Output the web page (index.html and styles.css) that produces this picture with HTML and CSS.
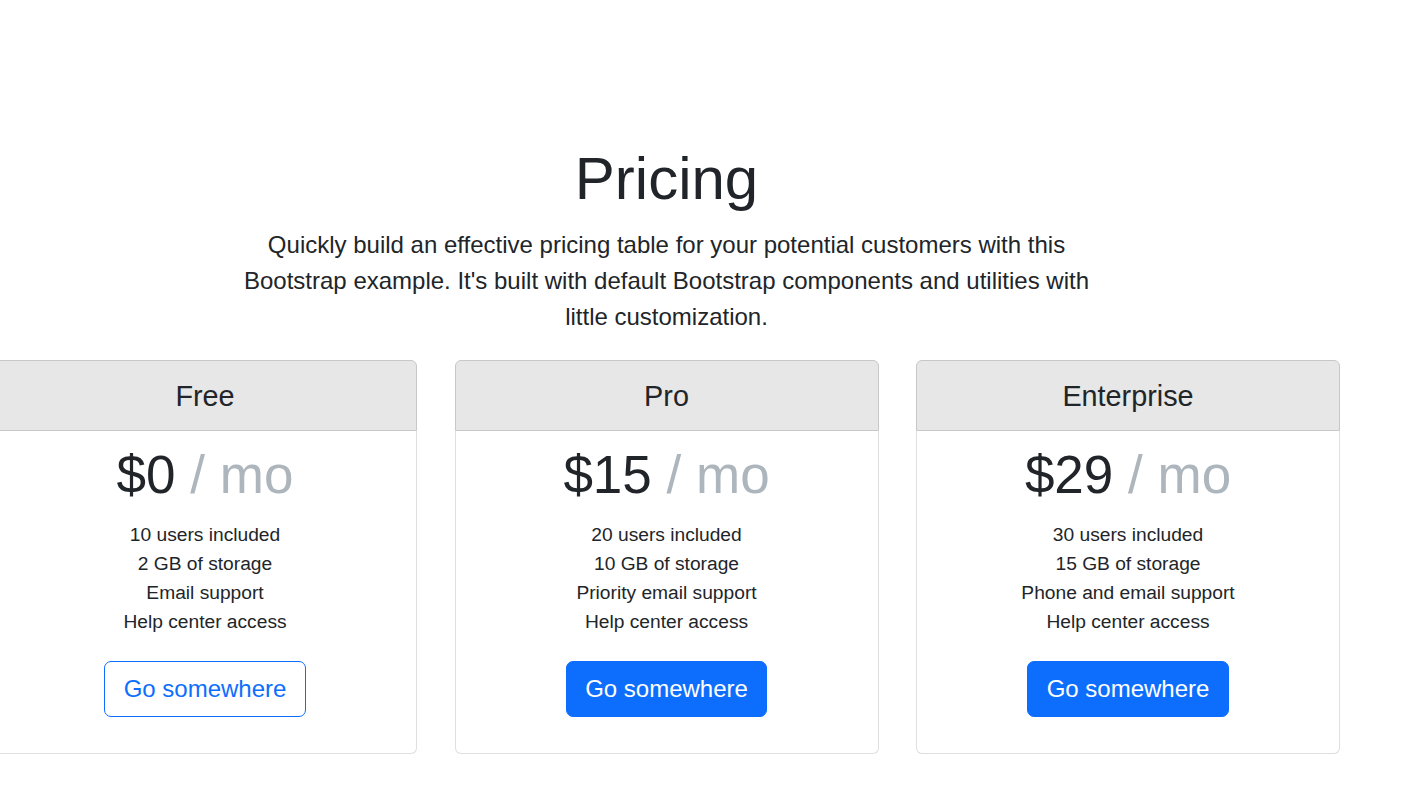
FILE: index.html
```html
<!DOCTYPE html>
<html lang="en">
<head>
<meta charset="utf-8">
<title>Pricing</title>
<link rel="stylesheet" href="styles.css">
</head>
<body>
<div class="page">
  <header class="hero">
    <h1 class="title">Pricing</h1>
    <p class="lead">Quickly build an effective pricing table for your potential customers with this Bootstrap example. It's built with default Bootstrap components and utilities with little customization.</p>
  </header>
  <main class="cards">
    <div class="card">
      <h4 class="card-header">Free</h4>
      <div class="card-body">
        <h1 class="price">$0 <span class="muted">/ mo</span></h1>
        <ul class="features">
          <li>10 users included</li>
          <li>2 GB of storage</li>
          <li>Email support</li>
          <li>Help center access</li>
        </ul>
        <a class="btn btn-outline" href="#">Go somewhere</a>
      </div>
    </div>
    <div class="card">
      <h4 class="card-header">Pro</h4>
      <div class="card-body">
        <h1 class="price">$15 <span class="muted">/ mo</span></h1>
        <ul class="features">
          <li>20 users included</li>
          <li>10 GB of storage</li>
          <li>Priority email support</li>
          <li>Help center access</li>
        </ul>
        <a class="btn btn-primary" href="#">Go somewhere</a>
      </div>
    </div>
    <div class="card">
      <h4 class="card-header">Enterprise</h4>
      <div class="card-body">
        <h1 class="price">$29 <span class="muted">/ mo</span></h1>
        <ul class="features">
          <li>30 users included</li>
          <li>15 GB of storage</li>
          <li>Phone and email support</li>
          <li>Help center access</li>
        </ul>
        <a class="btn btn-primary" href="#">Go somewhere</a>
      </div>
    </div>
  </main>
</div>
</body>
</html>
```

FILE: styles.css
```css
html, body {
  margin: 0;
  padding: 0;
  background: #ffffff;
}

body {
  font-family: "Liberation Sans", Arial, sans-serif;
  color: #212529;
  overflow: hidden;
}

.page {
  width: 1347px;
  margin-left: -7px;
}

.hero {
  text-align: center;
  padding-top: 143px;
}

.title {
  margin: 0;
  font-size: 60px;
  line-height: 72px;
  font-weight: 400;
}

.lead {
  margin: 12px auto 0;
  max-width: 860px;
  font-size: 24px;
  line-height: 36px;
}

.cards {
  display: flex;
  gap: 37.5px;
  margin-top: 25px;
}

.card {
  flex: none;
  width: 424px;
  text-align: center;
}

.card-header {
  margin: 0;
  padding: 17.5px 0 16.5px;
  font-size: 28.8px;
  line-height: 35px;
  font-weight: 400;
  background: #e7e7e7;
  border: 1px solid #c7c7c7;
  border-radius: 6px 6px 0 0;
}

.card-body {
  border: 1px solid #dfdfdf;
  border-top: 0;
  border-radius: 0 0 6px 6px;
  padding: 12px 20px 36px;
}

.price {
  margin: 0;
  font-size: 53px;
  line-height: 63.6px;
  font-weight: 400;
}

.muted {
  color: #adb5bd;
}

.features {
  list-style: none;
  padding: 0;
  margin: 13px 0 24.5px;
  font-size: 19.2px;
  line-height: 29.2px;
}

.btn {
  display: inline-block;
  font-size: 24px;
  line-height: 36px;
  padding: 9px 18.5px;
  border: 1px solid #0d6efd;
  border-radius: 7px;
  text-decoration: none;
}

.btn-primary {
  background: #0d6efd;
  color: #ffffff;
}

.btn-outline {
  background: #ffffff;
  color: #0d6efd;
}
```
